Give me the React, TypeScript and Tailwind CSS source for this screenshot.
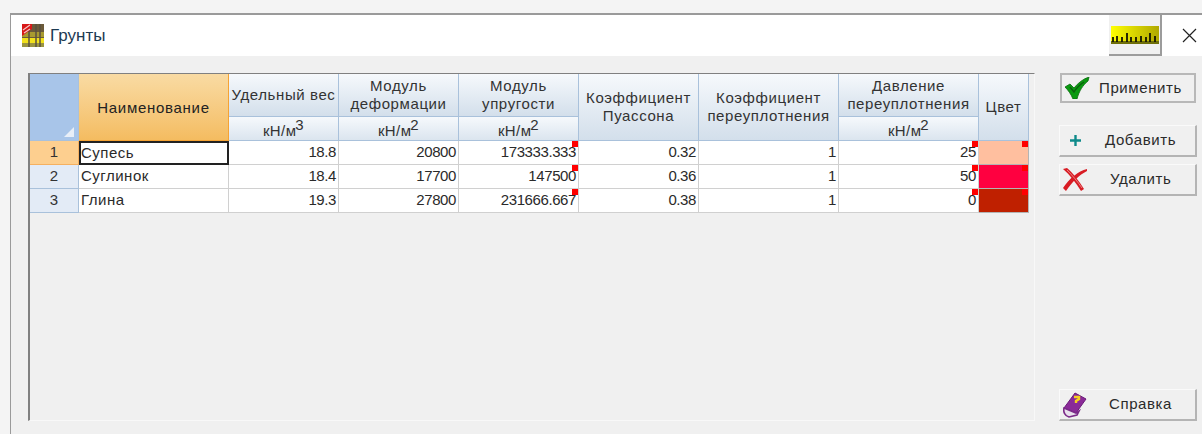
import type { ReactNode } from "react";

const FONT = "font-['Liberation_Sans',Arial,sans-serif]";
const HEAD = "bg-gradient-to-b from-[#f6f9fc] to-[#d3dfeb] border-r border-b border-[#a9c1db] flex items-center justify-center text-center leading-[18px] text-[#333] tracking-[0.6px] whitespace-nowrap";
const UNIT = "bg-gradient-to-b from-[#f6f9fc] to-[#dbe5ef] border-r border-b border-[#a9c1db] flex items-end justify-center text-[#333] leading-[18px] tracking-[0.4px]";

const soils = [
  { n: 1, name: "Супесь", w: "18.8", e0: "20800", e: "173333.333", nu: "0.32", k: "1", p: "25", color: "bg-[#ffbf9f]" },
  { n: 2, name: "Суглинок", w: "18.4", e0: "17700", e: "147500", nu: "0.36", k: "1", p: "50", color: "bg-[#ff0040]" },
  { n: 3, name: "Глина", w: "19.3", e0: "27800", e: "231666.667", nu: "0.38", k: "1", p: "0", color: "bg-[#bf2000]" },
];

function Mark() {
  return <span className="absolute top-0 right-0 w-[6px] h-[6px] bg-[#ff0000]" />;
}

function Unit({ pow }: { pow: number }) {
  return (
    <div className={UNIT}>
      <span>кН/м<span className="relative -top-[6px] -ml-px text-[15px]">{pow}</span></span>
    </div>
  );
}

function Num({ children, mark }: { children: ReactNode; mark?: boolean }) {
  return (
    <div className="relative bg-white border-r border-b border-[#d0d0d0] flex items-center justify-end pr-[2px] text-[#2a2a2a] tracking-[-0.4px]">
      {children}
      {mark && <Mark />}
    </div>
  );
}

function SoilIcon() {
  return (
    <svg width="22" height="23" viewBox="0 0 22 23">
      <rect width="22" height="23" fill="#6b5a3a" />
      <rect x="0" y="14" width="22" height="5" fill="#f2e11c" />
      <rect x="0" y="8" width="22" height="5" fill="#a89a30" />
      <rect x="0" y="19" width="22" height="4" fill="#9a9440" />
      <path d="M7 3v20M14 0v23M18 0v23" stroke="#5a5040" strokeWidth="1.5" />
      <path d="M0 0h10v5l-10 7z" fill="#d81818" />
      <path d="M1 6l7-5M2 9l6-4" stroke="#f4c8c8" strokeWidth="1.2" />
    </svg>
  );
}

function RulerIcon() {
  return (
    <svg width="48" height="18" viewBox="0 0 48 18">
      <defs>
        <linearGradient id="rulerFill" x1="0" y1="0" x2="1" y2="0">
          <stop offset="0" stopColor="#ffff00" />
          <stop offset="1" stopColor="#b0a800" />
        </linearGradient>
      </defs>
      <rect width="48" height="18" fill="url(#rulerFill)" />
      <rect y="15" width="48" height="3" fill="#6e6e08" />
      <path d="M2 16v-5M6 16v-6M11 16v-5M16 16v-9M20 16v-5M25 16v-5M30 16v-6M35 16v-5M39 16v-9M44 16v-6" stroke="#141400" strokeWidth="1.8" />
    </svg>
  );
}

function CheckIcon() {
  return (
    <svg width="25" height="22" viewBox="0 0 25 22">
      <path d="M0 10l5-3 4 4C13 6 18 2 24 0l-1 4c-5 4-9 10-11 18H8C6 17 3 13 0 10z" fill="#0a9a10" stroke="#086a0c" strokeWidth="0.8" />
      <path d="M5 10l4 5c3-5 7-8 10-10" stroke="#0b5f0e" strokeWidth="1.4" fill="none" />
    </svg>
  );
}

function PlusIcon() {
  return (
    <svg width="13" height="13" viewBox="0 0 13 13">
      <path d="M6.5 1v11M1 6.5h11" stroke="#0f8a8a" strokeWidth="2.4" />
    </svg>
  );
}

function CrossIcon() {
  return (
    <svg width="24" height="23" viewBox="0 0 24 23">
      <path d="M0 1l4-1c6 5 12 13 17 21l-3 2C13 15 7 7 0 1z" fill="#d81c24" />
      <path d="M24 1C15 3 6 11 0 20l3 3C9 14 16 7 24 3z" fill="#d81c24" />
      <path d="M4 2c5 5 11 12 15 18" stroke="#ee9a9a" strokeWidth="0.8" fill="none" />
    </svg>
  );
}

function BookIcon() {
  return (
    <svg width="24" height="26" viewBox="0 0 24 26">
      <path d="M1 16L12 1l11 6-10 14z" fill="#8a2a98" stroke="#6a1a78" strokeWidth="1" />
      <path d="M1 16c-1 4 1 8 5 9l8-2 2-4-3 2z" fill="#e8e0ec" stroke="#7a2a88" strokeWidth="1.6" />
      <path d="M11 5h5v2l-3 2v2" fill="none" stroke="#f5d020" strokeWidth="2.4" />
    </svg>
  );
}

function Btn({ icon, label, textLeft, className }: { icon: ReactNode; label: string; textLeft: string; className: string }) {
  return (
    <button className={`relative flex items-center text-[#2a2a2a] tracking-[0.6px] ${className}`}>
      <span className="w-[30px] flex items-center justify-center shrink-0">{icon}</span>
      <span className={textLeft}>{label}</span>
    </button>
  );
}

const RAISED = "w-[138px] h-[32px] bg-[#f0f0f0] border-t border-l border-t-[#fafafa] border-l-[#fafafa] border-r-2 border-b-2 border-r-[#b4b4b4] border-b-[#b4b4b4]";

export default function App() {
  return (
    <div className={`w-[1202px] h-[434px] overflow-hidden pt-[13px] pl-[10px] bg-[#f4f4f4] text-[15px] ${FONT}`}>
      <div className="h-[421px] border-t-2 border-l border-[#9a9a9a] flex flex-col bg-[#f0f0f0]">
        <div className="h-[41px] bg-white flex items-center shrink-0 pl-[11px]">
          <SoilIcon />
          <span className="ml-[6px] text-[17px] text-[#1d3a52]">Грунты</span>
          <div className="ml-auto h-[41px] w-[53px] bg-[#f0f0f0] border-r-2 border-b-2 border-[#9c9c9c] flex items-center justify-center">
            <RulerIcon />
          </div>
          <svg className="ml-[20px] mr-[5px]" width="15" height="15" viewBox="0 0 15 15">
            <path d="M1 1l13 13M14 1L1 14" stroke="#222" strokeWidth="1.2" />
          </svg>
        </div>

        <div className="flex-1 flex pt-[17px] pl-[17px]">
          <div className="w-[1007px] h-[348px] border-t border-l-2 border-t-[#808080] border-l-[#808080] border-r border-b border-r-[#f8f8f8] border-b-[#f8f8f8]">
            <div className="grid grid-cols-[49px_150px_110px_120px_120px_120px_140px_140px_50px] grid-rows-[43px_24px_24px_24px_24px]">
              <div className="row-span-2 relative bg-[#a8c5e9] border-r border-b border-[#a9c1db]">
                <span className="absolute right-[4px] bottom-[3px] w-0 h-0 border-l-[10px] border-l-transparent border-b-[10px] border-b-[#e8eff8]" />
              </div>
              <div className="row-span-2 bg-gradient-to-b from-[#f9dba3] to-[#f4bc60] border-r border-b border-[#f5a334] flex items-center justify-center text-[#222] tracking-[0.7px] pt-[2px]">
                Наименование
              </div>
              <div className={HEAD}>Удельный вес</div>
              <div className={HEAD}>Модуль<br />деформации</div>
              <div className={HEAD}>Модуль<br />упругости</div>
              <div className={`row-span-2 ${HEAD}`}>Коэффициент<br />Пуассона</div>
              <div className={`row-span-2 ${HEAD}`}>Коэффициент<br />переуплотнения</div>
              <div className={HEAD}>Давление<br />переуплотнения</div>
              <div className={`row-span-2 ${HEAD}`}>Цвет</div>
              <Unit pow={3} />
              <Unit pow={2} />
              <Unit pow={2} />
              <Unit pow={2} />

              {soils.map((s) => (
                <div key={s.n} className="contents">
                  <div className={`border-r border-b flex items-center justify-center text-[#333] ${s.n === 1 ? "bg-[#fdcf8f] border-[#f5b060]" : "bg-[#e3ebf6] border-[#a9c1db]"}`}>
                    {s.n}
                  </div>
                  <div className={`flex items-center text-[#2a2a2a] bg-white tracking-[0.5px] ${s.n === 1 ? "border-2 border-[#222]" : "pl-[2px] border-r border-b border-[#d0d0d0]"}`}>
                    {s.name}
                  </div>
                  <Num>{s.w}</Num>
                  <Num>{s.e0}</Num>
                  <Num mark>{s.e}</Num>
                  <Num>{s.nu}</Num>
                  <Num>{s.k}</Num>
                  <Num mark>{s.p}</Num>
                  <div className={`relative border-r border-b border-[#b4b4b4] ${s.color}`}>
                    <Mark />
                  </div>
                </div>
              ))}
            </div>
          </div>

          <div className="ml-[24px] w-[138px] h-[348px] flex flex-col">
            <Btn
              icon={<CheckIcon />}
              label="Применить"
              textLeft="ml-[7px]"
              className="ml-px w-[136px] h-[30px] border-2 border-[#b8b8b8] bg-[#f0f0f0]"
            />
            <Btn icon={<PlusIcon />} label="Добавить" textLeft="ml-[15px]" className={`mt-[22px] ${RAISED}`} />
            <Btn icon={<CrossIcon />} label="Удалить" textLeft="ml-[20px]" className={`mt-[7px] ${RAISED}`} />
            <Btn icon={<BookIcon />} label="Справка" textLeft="ml-[19px]" className={`mt-auto ${RAISED}`} />
          </div>
        </div>
      </div>
    </div>
  );
}
